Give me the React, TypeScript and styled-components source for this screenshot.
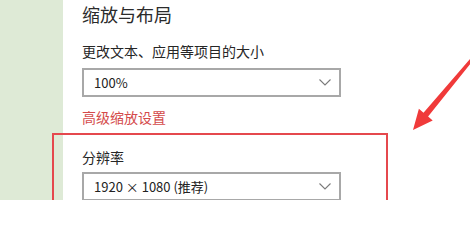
import React from 'react';
import styled, { createGlobalStyle } from 'styled-components';

const GlobalStyle = createGlobalStyle`
  html, body {
    margin: 0;
    padding: 0;
    background: #ffffff;
  }
  body {
    font-family: "Noto Sans CJK SC", "Noto Sans", sans-serif;
  }
`;

const Page = styled.div`
  position: relative;
  display: flex;
  width: 470px;
  height: 200px;
  overflow: hidden;
  background: #ffffff;
`;

const Sidebar = styled.aside`
  width: 63px;
  flex-shrink: 0;
  background: #deead6;
`;

const Content = styled.main`
  display: flex;
  flex-direction: column;
  padding: 2px 0 0 19px;
`;

const Title = styled.h2`
  margin: 0;
  font-size: 18px;
  line-height: 24px;
  font-weight: 400;
  color: #2b2b2b;
`;

const Label = styled.div<{ $top: number }>`
  margin-top: ${p => p.$top}px;
  font-size: 14px;
  line-height: 20px;
  color: #262626;
`;

const Link = styled.a`
  margin-top: 10px;
  font-size: 14px;
  line-height: 20px;
  color: #d44a4a;
  text-decoration: none;
`;

const Select = styled.div<{ $top: number }>`
  margin-top: ${p => p.$top}px;
  box-sizing: border-box;
  width: 259px;
  height: 29px;
  flex-shrink: 0;
  display: flex;
  align-items: center;
  justify-content: space-between;
  padding: 0 8px 0 10px;
  border: 2px solid #a8a8a8;
  background: #ffffff;
  font-family: "Noto Sans CJK SC", "Noto Sans", sans-serif;
  font-size: 13px;
  color: #222222;
`;

const Highlight = styled.div`
  position: absolute;
  left: 52px;
  top: 133px;
  width: 336px;
  height: 90px;
  border: 2px solid #e5484d;
  box-sizing: border-box;
  pointer-events: none;
`;

const Arrow = styled.svg`
  position: absolute;
  left: 0;
  top: 0;
  pointer-events: none;
`;

const Chevron: React.FC = () => (
  <svg width="12" height="7" viewBox="0 0 12 7">
    <path d="M0.5 0.5 L6 6 L11.5 0.5" fill="none" stroke="#7a7a7a" strokeWidth="1.1" />
  </svg>
);

const App: React.FC = () => {
  return (
    <>
      <GlobalStyle />
      <Page>
        <Sidebar />
        <Content>
          <Title>缩放与布局</Title>
          <Label $top={15}>更改文本、应用等项目的大小</Label>
          <Select $top={7}>
            <span>100%</span>
            <Chevron />
          </Select>
          <Link href="#">高级缩放设置</Link>
          <Label $top={20}>分辨率</Label>
          <Select $top={5}>
            <span>1920 × 1080 (推荐)</span>
            <Chevron />
          </Select>
        </Content>
        <Highlight />
        <Arrow width="470" height="200" viewBox="0 0 470 200">
          <polygon
            points="413,130 418.9,108.8 423.5,112.7 472.6,55.9 475,57.9 428.1,116.5 432.7,120.4"
            fill="#f03a3a"
          />
        </Arrow>
      </Page>
    </>
  );
};

export default App;
